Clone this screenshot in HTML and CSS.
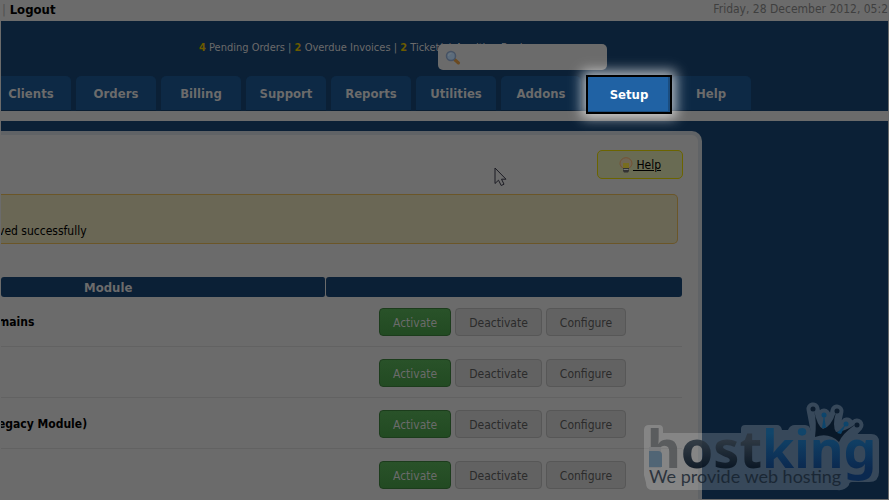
FILE: index.html
```html
<!DOCTYPE html>
<html lang="en">
<head>
  <meta charset="UTF-8" />
  <meta name="viewport" content="width=device-width, initial-scale=1" />
  <title>Addon Modules</title>
  <link rel="stylesheet" href="styles.css">
</head>
<body>
  <div class="page">
    <div class="topbar">
      <div class="user-links"><span class="sep">|</span> <a href="#logout">Logout</a></div>
      <div class="date">Friday, 28 December 2012, 05:2</div>
    </div>

    <header class="header">
      <div class="stats">
        <a href="#orders"><b>4</b> Pending Orders</a> | <a href="#invoices"><b>2</b> Overdue Invoices</a> | <a href="#tickets"><b>2</b> Ticket(s) Awaiting Reply</a>
      </div>
      <form class="search">
        <svg class="search-icon" width="16" height="16" viewBox="0 0 16 16">
          <path d="M9.500 9.500l4 3.500" stroke="#6b4a20" stroke-width="3" stroke-linecap="round" />
          <circle cx="6" cy="6" r="4.500" fill="#5c6c7c" stroke="#465264" stroke-width="1.500" />
          <path d="M3.500 6a2.500 2.500 0 0 1 3-2.500" fill="none" stroke="#68747e" stroke-width="1.500" />
        </svg>
        <input type="text" aria-label="Search">
      </form>
      <nav class="tabs">
        <a href="#clients">Clients</a>
        <a href="#orders">Orders</a>
        <a href="#billing">Billing</a>
        <a href="#support">Support</a>
        <a href="#reports">Reports</a>
        <a href="#utilities">Utilities</a>
        <a href="#addons">Addons</a>
        <div class="tab-slot"><a href="#setup" class="spotlight">Setup</a></div>
        <a href="#help">Help</a>
      </nav>
    </header>

    <main class="panel">
      <a href="#help" class="help-button">
        <svg width="14" height="16" viewBox="0 0 14 16">
          <path d="M7 .700a6 5.700 0 0 0-6 5.600c0 2.200 1.300 3.300 2.600 4.700h6.800c1.300-1.400 2.600-2.500 2.600-4.700A6 5.700 0 0 0 7 .700z" fill="#706653" stroke="#755334" />
          <path d="M4 6h6v5H4z" fill="#786d1f" />
          <path d="M4 11h6v3l-1 1.500H5L4 14z" fill="#333" />
          <path d="M4.500 12.500h5" stroke="#777" />
        </svg><span>&nbsp;Help</span>
      </a>

      <div class="notice">ved successfully</div>

      <table class="modules">
        <colgroup><col class="col-name"><col></colgroup>
        <thead>
          <tr><th>Module</th><th></th></tr>
        </thead>
        <tbody>
          <tr>
            <td>mains</td>
            <td><button class="btn activate">Activate</button><button class="btn">Deactivate</button><button class="btn">Configure</button></td>
          </tr>
          <tr>
            <td></td>
            <td><button class="btn activate">Activate</button><button class="btn">Deactivate</button><button class="btn">Configure</button></td>
          </tr>
          <tr>
            <td>egacy Module)</td>
            <td><button class="btn activate">Activate</button><button class="btn">Deactivate</button><button class="btn">Configure</button></td>
          </tr>
          <tr>
            <td></td>
            <td><button class="btn activate">Activate</button><button class="btn">Deactivate</button><button class="btn">Configure</button></td>
          </tr>
        </tbody>
      </table>
    </main>

    <!-- hostking watermark -->
    <svg class="watermark" width="246" height="100" viewBox="0 0 246 100">
      <defs>
        <linearGradient id="dark" x1="0" y1="0" x2="0" y2="1">
          <stop offset="0.400" stop-color="#2c3640" /><stop offset="0.800" stop-color="#06121f" />
        </linearGradient>
        <linearGradient id="blue" x1="0" y1="0" x2="0" y2="1">
          <stop offset="0.300" stop-color="#0d456c" /><stop offset="0.800" stop-color="#07264f" />
        </linearGradient>
      </defs>
      <g class="halo">
        <path d="M7 26h10q4 0 4 4v4h78v-4q0-4 4-4h32q4 0 5 5h6q2-5 7-5h10q5 0 6 6l4 3h56q8 0 8 8v30q0 10-10 10h-17q-3 0-3 3-4 6-12 5H10q-6 0-6-7l-2-8V31q0-5 5-5z" />
        <path class="halo-spikes" d="M176 36L171 10M182 34V16M190 36l5-24M194 40l11-15M200 42l15-16" />
      </g>
      <g class="letters">
        <text class="brand" x="5" y="69"><tspan fill="#56585a">h</tspan><tspan fill="url(#dark)">ost</tspan><tspan fill="url(#blue)">king</tspan></text>
        <path d="M7 48h12v21H7z" fill="#7b7c7e" />
        <path d="M7 52h9q4 0 4 4v12H7z" fill="#4c6274" />
      </g>
      <text class="tagline" x="7" y="84">We provide web hosting</text>
      <path d="M173 38q2-15-1-27 3 16 9 19 8-2 13-17-4 14 0 20 8 0 20-8-14 10-17 18-10-10-24-5z" fill="#091828" />
      <g fill="#0c1c2e"><circle cx="171" cy="10" r="2.500" /><circle cx="195" cy="12" r="2.500" /><circle cx="215" cy="26" r="2.500" /></g>
      <g fill="#0d456c"><circle cx="182" cy="16" r="2.500" /><path d="M182 16l2 13h-4z" /><circle cx="204" cy="25" r="2.500" /><path d="M204 25l-5 10-4-1z" /></g>
    </svg>

    <svg class="cursor" width="13" height="20" viewBox="0 0 13 20">
      <path d="M1 1v15.500l3.500-3.300 2.700 5.300 2.800-1.300-2.500-5h4.500z" fill="#6b6b6b" stroke="#1c1c24" />
    </svg>
  </div>
</body>
</html>
```
FILE: styles.css
```css
* { box-sizing: border-box; }

body {
  margin: 0;
  font-family: Tahoma, "DejaVu Sans Condensed", "DejaVu Sans", sans-serif;
  font-size: 12px;
  color: #000;
  background: #0b2036;
}

a { color: inherit; text-decoration: none; }

.page {
  position: relative;
  height: 100vh;
  overflow: hidden;
  border: 1px solid #6b6b6b;
  border-top: 0;
}

.topbar {
  display: flex;
  justify-content: space-between;
  height: 21px;
  line-height: 19px;
  background: #6b6b6b;
}

.user-links { padding-left: 1px; font-size: 13px; }
.user-links a { font-weight: bold; }
.sep { color: #505050; }
.date { color: #3f3f3f; }

.header {
  position: relative;
  display: flex;
  flex-direction: column;
  justify-content: space-between;
  height: 100px;
  border-bottom: 10px solid #6b6b6b;
}

.stats {
  margin: 20px 0 0 198px;
  line-height: 14px;
  font-size: 11px;
  color: #6b6b6b;
}

.stats b { color: #6b5a00; }

.search {
  position: absolute;
  top: 23px;
  left: 437px;
}

.search-icon { position: absolute; top: 6px; left: 7px; }

.search input {
  display: block;
  width: 169px;
  height: 26px;
  padding: 0 8px 0 28px;
  border: 0;
  border-radius: 5px;
  background: #6b6b6b;
}

.tabs {
  display: flex;
  gap: 5px;
  margin-left: -10px;
}

.tabs > * {
  flex: none;
  width: 80px;
  height: 35px;
}

.tabs a {
  line-height: 35px;
  font-size: 13px;
  font-weight: bold;
  text-align: center;
  color: #6b6b6b;
  background: #0d2945;
  border-bottom: 1px solid #0a1d31;
  border-radius: 5px 5px 0 0;
}

.tab-slot { position: relative; }

.tabs .spotlight {
  position: absolute;
  z-index: 1;
  top: -1px;
  left: 0;
  width: 86px;
  height: 39px;
  color: #fff;
  background: #2062a4;
  border: 2px solid #000;
  border-radius: 0;
  box-shadow: 0 0 12px 4px rgba(255, 255, 255, 0.7), inset -2px -1px #1a4d80;
}

.panel {
  margin: 10px 186px 0 0;
  height: 100vh;
  padding: 15px 16px 0 0;
  background: #6b6b6b;
  border: solid #606366;
  border-width: 4px 4px 0 0;
  border-radius: 0 10px 0 0;
}

.help-button {
  display: flex;
  align-items: center;
  justify-content: center;
  width: 86px;
  height: 29px;
  margin: 0 -1px 0 auto;
  background: #696b53;
  border: 1px solid #6b6400;
  border-radius: 5px;
}

.help-button span { text-decoration: underline; }

.notice {
  height: 50px;
  margin: 15px 4px 33px 0;
  padding-top: 28px;
  line-height: 16px;
  text-indent: -3px;
  background: #6a6755;
  border: 1px solid #6b5628;
  border-left: 0;
  border-radius: 0 5px 5px 0;
}

.modules {
  width: 100%;
  table-layout: fixed;
  border-collapse: separate;
  border-spacing: 0;
}

.col-name { width: 325px; }

.modules th {
  height: 20px;
  padding: 0;
  font-size: 13px;
  color: #6b6b6b;
  background: #0b2036;
  border-radius: 3px;
}

.modules th:first-child {
  padding-left: 83px;
  text-align: left;
  border-right: 1px solid #6b6b6b;
}

.modules td {
  padding: 12px 0 10px;
  border-bottom: 1px solid #626262;
  font-weight: bold;
  text-indent: -3px;
}

.modules tr:first-child td { padding-top: 11px; }

.modules td:last-child {
  padding-left: 53px;
  font-size: 0;
  text-indent: 0;
}

.btn {
  height: 28px;
  margin-right: 4px;
  padding: 1px 13px 0;
  font-family: inherit;
  font-size: 12px;
  color: #2b2b2b;
  vertical-align: top;
  background: #626262;
  border: 1px solid #575757;
  border-radius: 4px;
}

.btn.activate {
  color: #6b6b6b;
  background: linear-gradient(#295229, #224a22);
  border-color: #1c3c1c;
}

.watermark { position: absolute; right: 0; bottom: 0; }

.brand { font: bold 52px "Noto Sans", sans-serif; }
.tagline { font: 18px Lato, sans-serif; fill: #14202c; opacity: 0.8; }
.letters { opacity: 0.9; }

.halo { fill: #fff; opacity: 0.18; }

.halo-spikes {
  stroke: #fff;
  stroke-width: 13px;
  stroke-linecap: round;
}

.cursor { position: absolute; top: 167px; left: 493px; }
```
